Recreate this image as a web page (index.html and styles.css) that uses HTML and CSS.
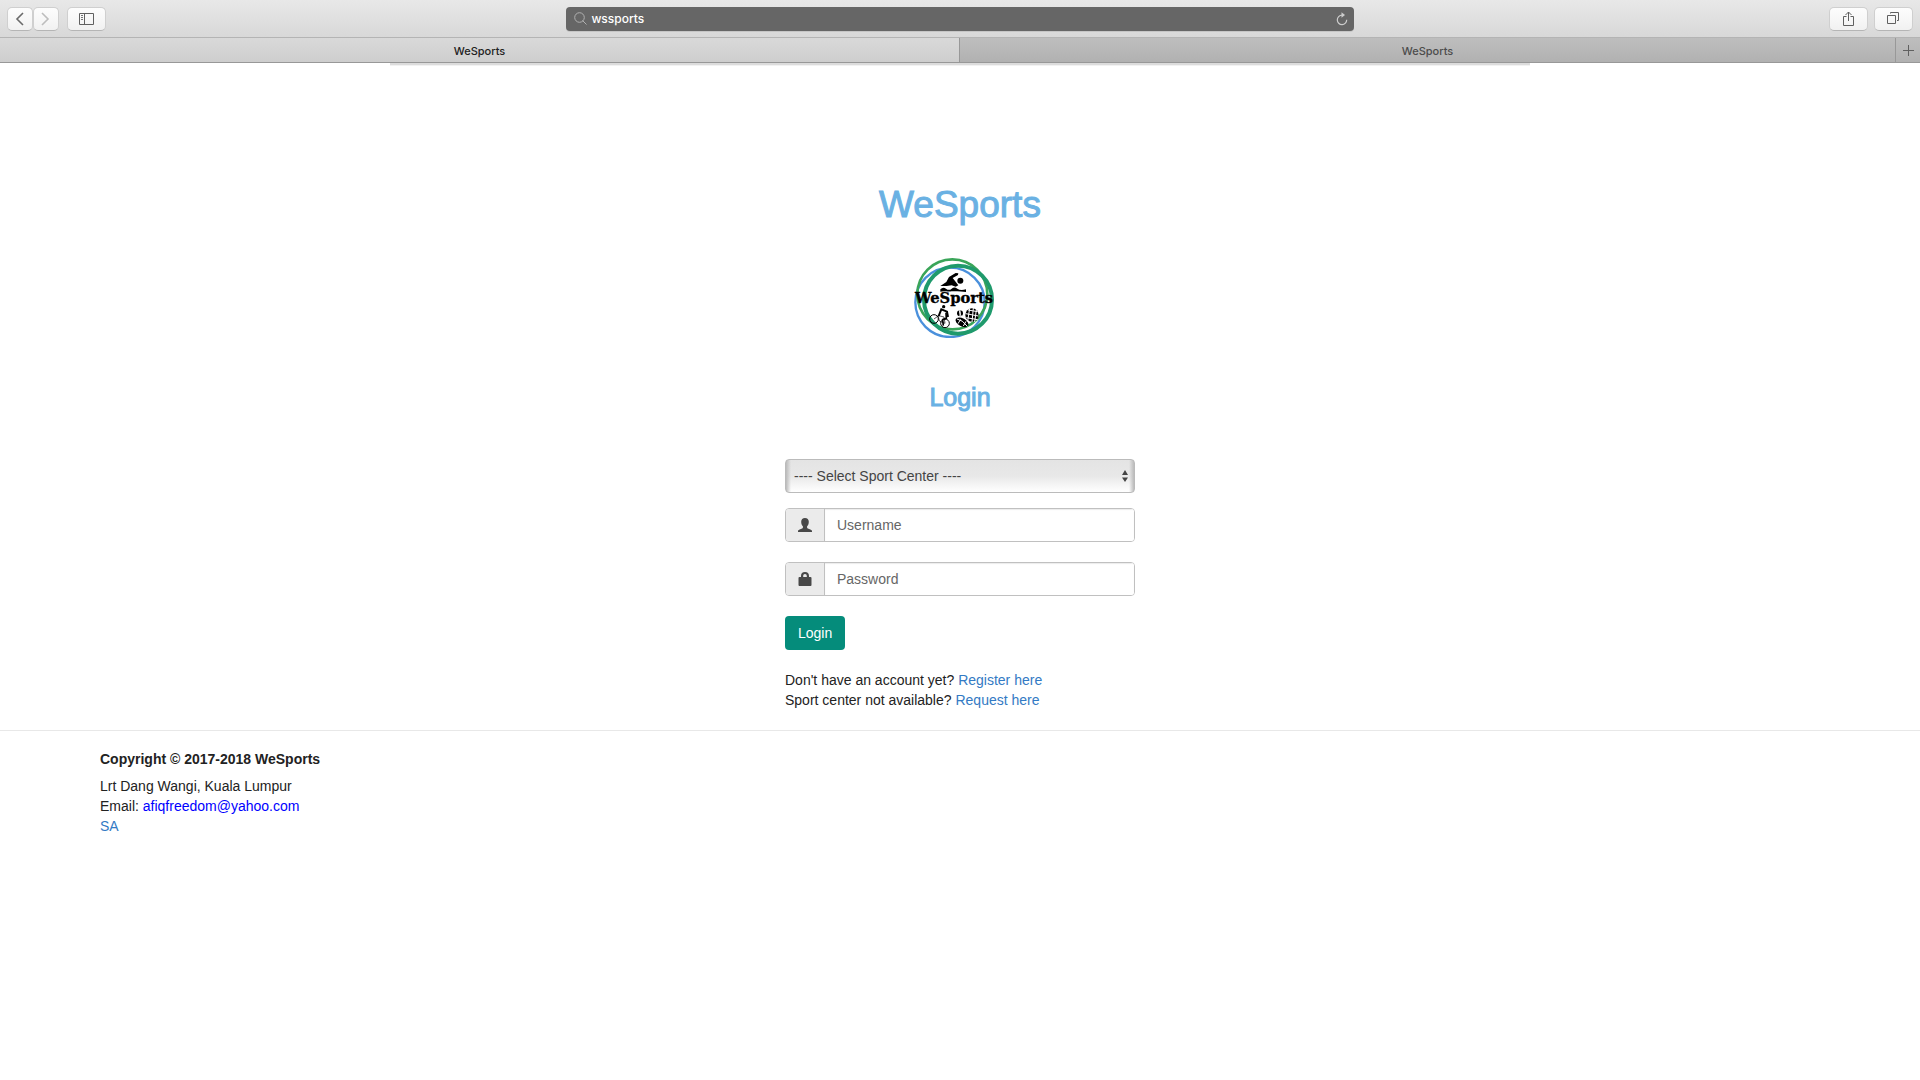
FILE: index.html
```html
<!DOCTYPE html>
<html lang="en">
<head>
<meta charset="utf-8">
<meta name="viewport" content="width=device-width, initial-scale=1">
<title>WeSports</title>
<link rel="stylesheet" href="styles.css">
</head>
<body>
<header class="browser">
  <div class="toolbar">
    <div class="tools">
      <div class="history">
        <button class="tool tool-nav" type="button" aria-label="Back"><svg width="26" height="22" viewBox="0 0 26 22"><path d="M16 5 10 11l6 6" fill="none" stroke="#6a6a6a" stroke-width="1.6"/></svg></button>
        <button class="tool tool-nav" type="button" aria-label="Forward"><svg width="26" height="22" viewBox="0 0 26 22"><path d="m9 5 6 6-6 6" fill="none" stroke="#bdbdbd" stroke-width="1.6"/></svg></button>
      </div>
      <button class="tool" type="button" aria-label="Sidebar"><svg width="16" height="12" viewBox="0 0 16 12"><path d="M.5.5h14v11H.5zM5.500.5v11" fill="none" stroke="#606060"/><path d="M2 2.500h2M2 4.500h2M2 6.500h2" stroke="#777"/></svg></button>
    </div>
    <div class="address">
      <svg width="13" height="13" viewBox="0 0 13 13"><path d="m8.500 8.500 4 4" stroke="#b0b0b0"/><circle cx="5.500" cy="5.500" r="4.800" fill="none" stroke="#b0b0b0"/></svg>
      <input class="address-input" type="text" value="wssports" aria-label="Address">
      <button class="reload" type="button" aria-label="Reload"><svg width="12" height="14" viewBox="0 0 12 14"><path d="M6 3.200a4.700 4.700 0 1 0 4.700 4.600" fill="none" stroke="#ccc" stroke-width="1.200"/><path d="M5.500.3 9 3 5.500 5.800z" fill="#ccc"/></svg></button>
    </div>
    <div class="tools tools-end">
      <button class="tool" type="button" aria-label="Share"><svg width="12" height="16" viewBox="0 0 12 16"><path d="M3.500 5.500h-3v9h10v-9h-3M5.500 10V1M2.500 4l3-3 3 3" fill="none" stroke="#606060"/></svg></button>
      <button class="tool" type="button" aria-label="Show tabs"><svg width="13" height="13" viewBox="0 0 13 13"><path d="M.5 3.500h8v8h-8zM3.500 1.500v-1h8v8h-1.500" fill="none" stroke="#606060"/></svg></button>
    </div>
  </div>
  <nav class="tabs">
    <div class="tab-half"><button class="tab tab-active" type="button">WeSports</button></div>
    <div class="tab-half"><button class="tab" type="button">WeSports</button><button class="tab-new" type="button" aria-label="New tab"><svg width="11" height="11" viewBox="0 0 11 11"><path d="M5.500 0v11M0 5.500h11" stroke="#606060"/></svg></button></div>
  </nav>
</header>
<div class="page-strip"></div>
<main class="login">
  <h1 class="brand">WeSports</h1>
  <svg class="logo" width="80" height="80" viewBox="42 24 240 240" role="img" aria-label="WeSports logo">
    <g fill="none">
      <circle cx="150" cy="157" r="104" stroke="#4a90dc" stroke-width="7"/>
      <circle cx="157" cy="133" r="105" stroke="#3aa559" stroke-width="8"/>
      <circle cx="174" cy="149" r="102" stroke="#1f9a6c" stroke-width="12"/>
    </g>
    <circle cx="181" cy="92" r="9"/>
    <path d="M121 108 139 96l8-15 20-12 8 1-1 5-16 9 17 22-8 4-12-4-15 2z"/>
    <path d="M121 118q8-9 17-2t17 0 17 0 26 2v8q-17-1-26-2t-17 0-17 0-17 1z"/>
    <g fill="none" stroke="#000">
      <circle cx="102" cy="207" r="13" stroke-width="3"/>
      <circle cx="135" cy="220" r="13" stroke-width="3"/>
      <path d="m102 207 14-10 16 4 3 19-17-7-4-18" stroke-width="2"/>
      <path d="m116 198 8-20 17 7 3 16" stroke-width="6"/>
      <path d="m138 188 1 17-11 4 2 18" stroke-width="5"/>
    </g>
    <circle cx="131" cy="170" r="5"/>
    <circle cx="216" cy="195" r="20"/>
    <circle cx="180" cy="190" r="9"/>
    <ellipse cx="186" cy="217" rx="21" ry="12" transform="rotate(28 186 217)"/>
    <g fill="none" stroke="#fff" stroke-width="3">
      <path d="m197 191 38 7M199 203l34 6M204 180l29 5M209 175l-6 39M220 174l-4 42M229 180l-5 36"/>
      <path d="M177 180q8 10 2 20M183 181q-9 8 2 18M171 207q16 2 31 22M182 208l-8 13M198 214l-8 14"/>
    </g>
    <text class="logo-text" x="162" y="158" text-anchor="middle">WeSports</text>
  </svg>
  <h2 class="login-title">Login</h2>
  <form class="login-form">
    <div class="select-wrap">
      <select class="center-select" aria-label="Sport center"><option>---- Select Sport Center ----</option></select>
      <svg class="select-arrows" width="6" height="12" viewBox="0 0 6 12"><path d="M3 0 6 5H0zM3 12 0 7.500h6z" fill="#444"/></svg>
    </div>
    <div class="field">
      <label class="field-icon" for="username"><svg width="14" height="14" viewBox="0 0 14 14" role="img" aria-label="Username"><path d="M7 0c2.400 0 3.800 1.500 3.800 3.700 0 2-.7 3.500-1.700 4.600v1.200c0 .6.500.9 1.400 1.300 1.700.7 3.500 1.200 3.500 2.200v1H0v-1c0-1 1.800-1.500 3.500-2.200.9-.4 1.400-.7 1.400-1.300V8.300C3.900 7.200 3.200 5.700 3.200 3.700 3.200 1.500 4.600 0 7 0z" fill="#484848"/></svg></label>
      <input class="field-input" id="username" type="text" placeholder="Username">
    </div>
    <div class="field">
      <label class="field-icon" for="password"><svg width="14" height="14" viewBox="0 0 14 14" role="img" aria-label="Password"><path d="M1.500 5H3V4c0-2.500 1.300-4 4-4s4 1.500 4 4v1h1.500q1 0 1 1v7q0 1-1 1h-11q-1 0-1-1V6q0-1 1-1zm3.700 0h3.600V4c0-1.300-.6-2-1.800-2s-1.800.7-1.800 2z" fill="#484848"/></svg></label>
      <input class="field-input" id="password" type="password" placeholder="Password">
    </div>
    <button class="submit" type="submit">Login</button>
    <p class="hints">Don't have an account yet? <a href="#register">Register here</a><br>Sport center not available? <a href="#request">Request here</a></p>
  </form>
</main>
<footer class="footer">
  <h3 class="copyright">Copyright © 2017-2018 WeSports</h3>
  <address class="contact">Lrt Dang Wangi, Kuala Lumpur<br>Email: <a class="mail" href="mailto:afiqfreedom@yahoo.com">afiqfreedom@yahoo.com</a><br><a href="#sa">SA</a></address>
</footer>
</body>
</html>
```
FILE: styles.css
```css
* { box-sizing: border-box; }

body {
  margin: 0;
  background: #fff;
  color: #222;
  font: 14px/20px "Liberation Sans", Arial, sans-serif;
}

button, input, select { margin: 0; font: inherit; }
svg { display: block; flex: none; }
a { color: #337ac4; text-decoration: none; }

/* Browser bar */
.browser { font-family: Inter, sans-serif; }

.toolbar {
  display: grid;
  grid-template-columns: 1fr 41% 1fr;
  align-items: center;
  height: 38px;
  border-bottom: 1px solid #b4b4b4;
  background: linear-gradient(#e8e8e8, #d8d8d8);
}

.tools { display: flex; gap: 8px; padding: 0 7px; }
.tools-end { justify-content: flex-end; gap: 6px; }
.history { display: flex; }

.tool {
  display: flex;
  align-items: center;
  justify-content: center;
  width: 39px;
  height: 24px;
  padding: 0;
  border: 1px solid #cfcfcf;
  border-bottom-color: #b5b5b5;
  border-radius: 5px;
  background: linear-gradient(#fdfdfd, #f1f1f1);
}

.tool-nav { width: 26px; }

.address {
  display: flex;
  align-items: center;
  gap: 4px;
  height: 24px;
  padding: 0 6px 0 8px;
  border-radius: 4px;
  background: #666;
  box-shadow: 0 1px #c6c6c6;
}

.address-input {
  flex: 1;
  min-width: 0;
  height: 24px;
  padding: 0;
  border: 0;
  outline: 0;
  background: none;
  color: #fff;
  font-size: 12px;
  font-weight: 500;
}

.reload { padding: 0; border: 0; background: none; }

.tabs { display: flex; height: 25px; }
.tab-half { display: flex; flex: 1; }

.tab {
  flex: 1;
  padding: 1px 0 0;
  border: 0;
  border-bottom: 1px solid #989898;
  background: linear-gradient(#bebebe, #b1b1b1);
  color: #4c4c4c;
  font-size: 11px;
  font-weight: 500;
}

.tab-active {
  border-right: 1px solid #989898;
  background: linear-gradient(#d9d9d9, #cecece);
  color: #222;
}

.tab-new {
  display: flex;
  align-items: center;
  justify-content: center;
  width: 25px;
  padding: 0;
  border: 0;
  border-left: 1px solid #989898;
  border-bottom: 1px solid #989898;
  background: linear-gradient(#bebebe, #b1b1b1);
}

.page-strip {
  width: 1140px;
  max-width: 100%;
  height: 2px;
  margin: 0 auto;
  background: #dcdcdc;
  box-shadow: 0 1px #f2f2f2;
}

/* Login */
.login {
  display: flex;
  flex-direction: column;
  align-items: center;
  padding-top: 120px;
}

.brand, .login-title {
  margin: 0;
  color: #6ab1e3;
  font-weight: 400;
  -webkit-text-stroke: 1px #6ab1e3;
}

.brand { font-size: 37px; line-height: 40px; }
.login-title { font-size: 25px; line-height: 26px; }

.logo { margin: 33px 12px 46px 0; }

.logo-text {
  font: bold 44px "DejaVu Serif", serif;
  stroke: #000;
  stroke-width: 1px;
}

.login-form {
  width: 350px;
  max-width: 100%;
  margin-top: 49px;
}

.select-wrap { position: relative; margin-bottom: 15px; }

.center-select {
  display: block;
  width: 100%;
  height: 34px;
  padding: 0 8px;
  border: 1px solid #bbb;
  border-radius: 4px;
  appearance: none;
  background:
    linear-gradient(to right, #bbb, transparent 5px calc(100% - 5px), #bbb),
    linear-gradient(#e4e4e4, #e8e8e8 50%, #fff);
  color: #444;
}

.select-arrows { position: absolute; top: 11px; right: 7px; pointer-events: none; }

.field {
  display: flex;
  height: 34px;
  margin-bottom: 20px;
  overflow: hidden;
  border: 1px solid #c0c0c0;
  border-radius: 4px;
}

.field-icon {
  display: flex;
  align-items: center;
  justify-content: center;
  width: 39px;
  border-right: 1px solid #c0c0c0;
  background: #ebebeb;
}

.field-input {
  flex: 1;
  min-width: 0;
  padding: 0 12px;
  border: 0;
  outline: 0;
  background: #fff;
  box-shadow: inset 0 1px 1px #ececec;
}

.field-input::placeholder { color: #666; opacity: 1; }

.submit {
  display: block;
  height: 34px;
  padding: 0 13px;
  border: 0;
  border-radius: 4px;
  background: #058c7b;
  color: #fff;
}

.hints { margin: 20px 0; }

/* Footer */
.footer {
  padding: 18px 100px;
  border-top: 1px solid #e8e8e8;
}

.copyright {
  margin: 0 0 7px;
  font-size: 14px;
  font-weight: 700;
}

.contact { font-style: normal; }
.mail { color: #00f; }
```
